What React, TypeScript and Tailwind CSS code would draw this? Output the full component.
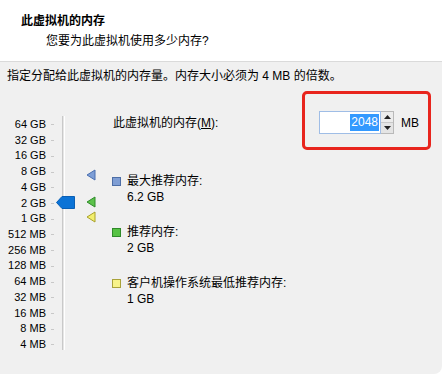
import React from 'react';

const font = { fontFamily: '"Liberation Sans", "Noto Sans CJK SC", sans-serif' };

const sizes = [
  '64 GB', '32 GB', '16 GB', '8 GB', '4 GB', '2 GB', '1 GB', '512 MB',
  '256 MB', '128 MB', '64 MB', '32 MB', '16 MB', '8 MB', '4 MB',
];

// 小三角形标记
const Marker = ({ fill, stroke, top }: { fill: string; stroke: string; top: number }) => (
  <svg className="absolute left-[86px]" style={{ top }} width="10" height="12" viewBox="0 0 10 12">
    <path d="M1 6 L9 1 L9 11 Z" fill={fill} stroke={stroke} strokeWidth="1" strokeLinejoin="round" />
  </svg>
);

const Legend = ({ color, border, title, value }: { color: string; border: string; title: string; value: string }) => (
  <div className="flex items-start">
    <div className={`mt-[4px] w-[9px] h-[9px] border ${color} ${border}`} />
    <div className="ml-[6px] leading-[16px]">
      <div>{title}</div>
      <div className="text-[12px]">{value}</div>
    </div>
  </div>
);

const App = () => {
  return (
    <div className="w-[442px] h-[374px] flex flex-col bg-white text-[12px] text-black" style={font}>
      {/* 标题 */}
      <div className="h-[62px] bg-white border-b border-[#dadada] pt-[13px] leading-[16px]">
        <div className="pl-[21px] font-bold">此虚拟机的内存</div>
        <div className="pl-[46px] mt-[4px]">您要为此虚拟机使用多少内存?</div>
      </div>

      <div className="flex-1 bg-[#f0f0f0] rounded-br-[8px] flex flex-col">
        <div className="pl-[7px] pt-[6px] leading-[16px]">
          指定分配给此虚拟机的内存量。内存大小必须为 4 MB 的倍数。
        </div>

        <div className="flex mt-[7px]">
          {/* 滑块 */}
          <div className="relative w-[100px] flex">
            <div className="w-[46px] pt-[26px] text-right text-[11px]">
              {sizes.map((s) => (
                <div key={s} className="h-[15.72px] leading-[15.72px] whitespace-nowrap">{s}</div>
              ))}
            </div>
            <div className="w-[6px] pt-[26px] ml-[5px]">
              {sizes.map((s) => (
                <div key={s} className="h-[15.72px] flex items-center">
                  <div className="w-[3px] h-px bg-[#c8c8c8]" />
                </div>
              ))}
            </div>
            <div className="ml-[5px] mt-[25px] h-[234px] w-[3px] border-l border-[#c9c9c9] border-r border-r-white bg-[#e6e6e6]" />

            <svg className="absolute left-[56px] top-[105px]" width="19" height="13" viewBox="0 0 19 13">
              <path d="M0.5 6.5 L6 0.5 L18.5 0.5 L18.5 12.5 L6 12.5 Z" fill="#0b73d6" stroke="#0a5fb4" />
            </svg>
            <Marker fill="#7d9ed6" stroke="#4a6fb0" top={78} />
            <Marker fill="#5cc24a" stroke="#2e8b2a" top={105} />
            <Marker fill="#f3ef6e" stroke="#a9a12a" top={120} />
          </div>

          {/* 右侧 */}
          <div className="flex-1 flex flex-col">
            <div className="flex items-start">
              <div className="mt-[24px] ml-[13px] leading-[16px]">
                此虚拟机的内存(<span className="underline">M</span>):
              </div>
              <div className="ml-auto mr-[11px] w-[129px] h-[59px] border-[3px] border-[#e8251d] rounded-[5px] flex items-center pl-[14px] pt-[4px]">
                <div className="w-[62px] h-[23px] border border-[#9fbde6] bg-white flex items-center justify-end pr-[1px]">
                  <span className="bg-[#3399ff] text-white leading-[17px] px-px">2048</span>
                </div>
                <div className="w-[13px] h-[23px] flex flex-col border border-l-0 border-[#b9b9b9]">
                  <div className="flex-1 flex items-center justify-center bg-[#ececec] border-b border-[#c8c8c8]">
                    <svg width="7" height="4" viewBox="0 0 7 4"><path d="M0 4 L3.5 0 L7 4 Z" fill="#222" /></svg>
                  </div>
                  <div className="flex-1 flex items-center justify-center bg-[#e4e4e4]">
                    <svg width="7" height="4" viewBox="0 0 7 4"><path d="M0 0 L3.5 4 L7 0 Z" fill="#222" /></svg>
                  </div>
                </div>
                <span className="ml-[7px]">MB</span>
              </div>
            </div>

            <div className="ml-[12px] mt-[23px] flex flex-col gap-[19px]">
              <Legend color="bg-[#7f9ed4]" border="border-[#4d6ea6]" title="最大推荐内存:" value="6.2 GB" />
              <Legend color="bg-[#56c244]" border="border-[#2f8a2a]" title="推荐内存:" value="2 GB" />
              <Legend color="bg-[#f7f38a]" border="border-[#a9a23a]" title="客户机操作系统最低推荐内存:" value="1 GB" />
            </div>
          </div>
        </div>
      </div>
    </div>
  );
};

export default App;
